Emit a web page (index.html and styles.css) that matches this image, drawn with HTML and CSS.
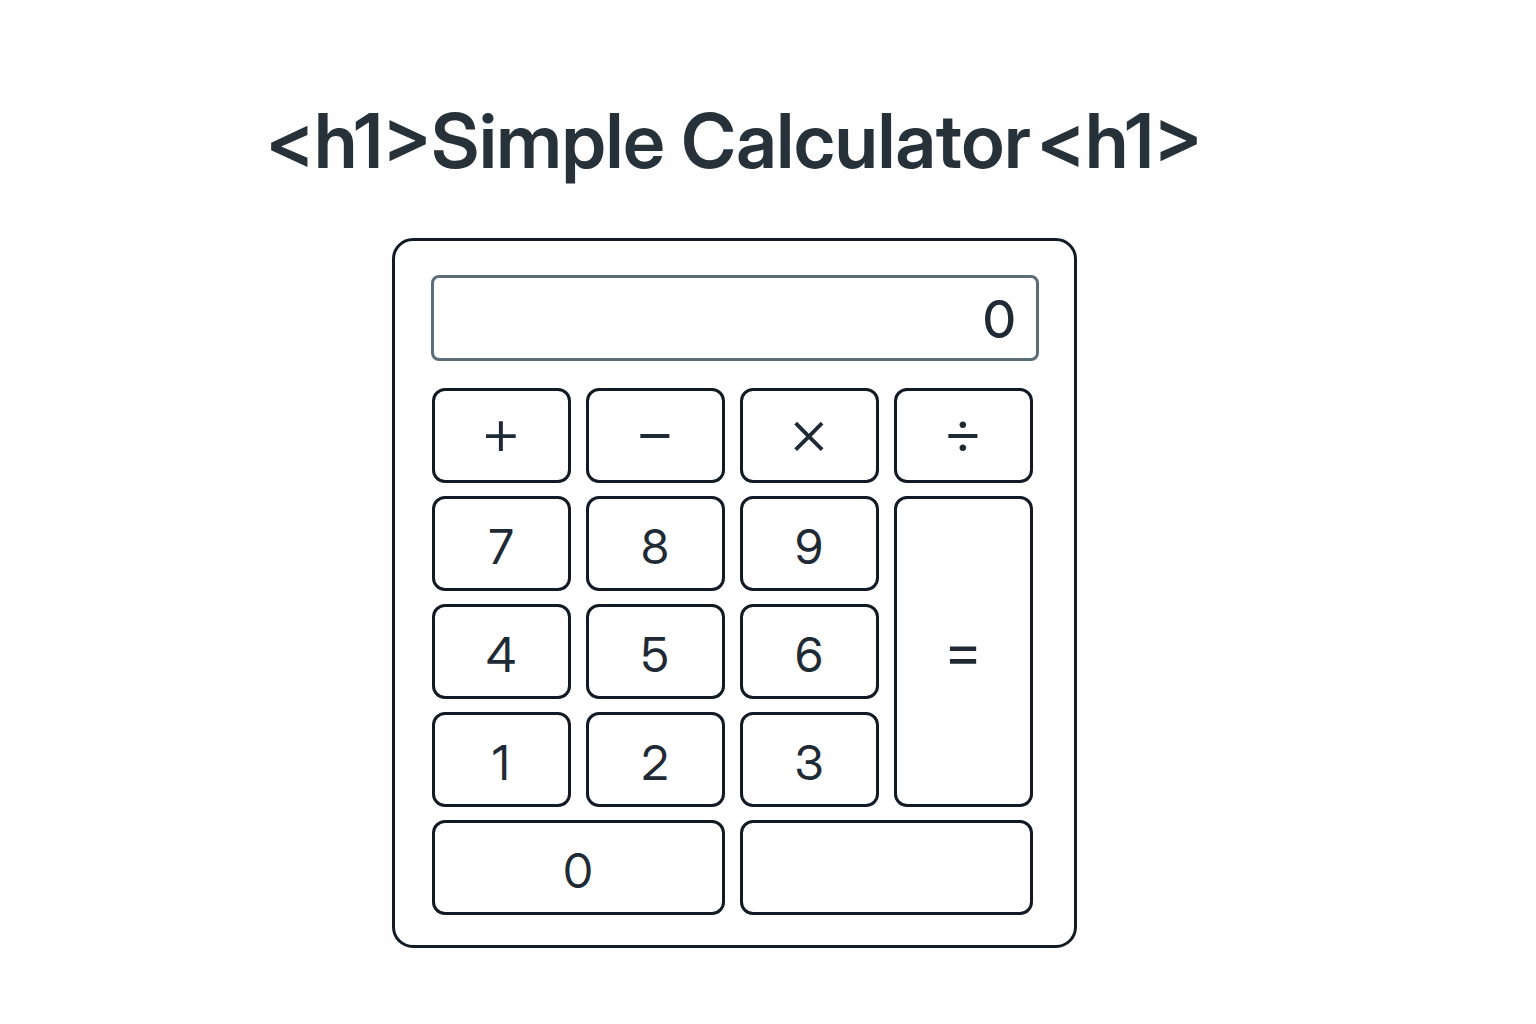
FILE: index.html
```html
<!DOCTYPE html>
<html lang="en">
<head>
  <meta charset="utf-8">
  <meta name="viewport" content="width=device-width, initial-scale=1">
  <title>Simple Calculator</title>
  <link rel="stylesheet" href="styles.css">
</head>
<body>
  <main class="page">
    <h1 class="title"><span>&lt;h1&gt;Simple Calculator</span><span>&lt;h1&gt;</span></h1>
    <section class="calculator" aria-label="Calculator">
      <input class="display" type="text" value="0" aria-label="Result" readonly>
      <div class="keys">
        <button class="key operator" type="button" aria-label="Add">+</button>
        <button class="key operator" type="button" aria-label="Subtract">−</button>
        <button class="key operator" type="button" aria-label="Multiply">×</button>
        <button class="key operator" type="button" aria-label="Divide">÷</button>
        <button class="key" type="button">7</button>
        <button class="key" type="button">8</button>
        <button class="key" type="button">9</button>
        <button class="key equals" type="button" aria-label="Equals">=</button>
        <button class="key" type="button">4</button>
        <button class="key" type="button">5</button>
        <button class="key" type="button">6</button>
        <button class="key" type="button">1</button>
        <button class="key" type="button">2</button>
        <button class="key" type="button">3</button>
        <button class="key wide" type="button">0</button>
        <button class="key wide" type="button" aria-label="Blank"></button>
      </div>
    </section>
  </main>
</body>
</html>
```
FILE: styles.css
```css
* {
  box-sizing: border-box;
}

body {
  margin: 0;
  background: #fefefe;
  color: #27313a;
  font-family: "Inter Display", Inter, "Liberation Sans", sans-serif;
}

.page {
  display: flex;
  flex-direction: column;
  align-items: center;
  gap: 49px;
  padding: 93px 68px 76px 0;
}

.title {
  display: flex;
  flex-wrap: wrap;
  justify-content: center;
  gap: 0 6px;
  margin: 0;
  font-size: 75px;
  font-weight: 600;
  line-height: 96px;
}

.calculator {
  width: 100%;
  max-width: 685px;
  padding: 34px 35px 30px 36px;
  border: 3px solid #111a25;
  border-radius: 21px;
  background: #fff;
}

.display {
  display: block;
  width: 100%;
  height: 86px;
  margin-bottom: 27px;
  padding: 2px 20px 0;
  border: 3px solid #5b6d77;
  border-radius: 8px;
  background: #fff;
  color: #202a35;
  font: inherit;
  font-size: 52px;
  font-weight: 500;
  text-align: right;
}

.keys {
  display: grid;
  grid-template-columns: repeat(4, 1fr);
  grid-auto-rows: 95px;
  gap: 13px 15px;
  padding: 0 6px 0 1px;
}

.key {
  padding: 6px 0 0;
  border: 3px solid #111a25;
  border-radius: 13px;
  background: #fff;
  color: #202a35;
  font: inherit;
  font-size: 48px;
  line-height: 60px;
  cursor: pointer;
}

.operator {
  padding: 0 0 10px;
  font-size: 66px;
  font-weight: 300;
}

.equals {
  grid-column: 4;
  grid-row: 2 / span 3;
  padding: 0 0 4px;
  font-size: 60px;
}

.wide {
  grid-column: span 2;
}
```
